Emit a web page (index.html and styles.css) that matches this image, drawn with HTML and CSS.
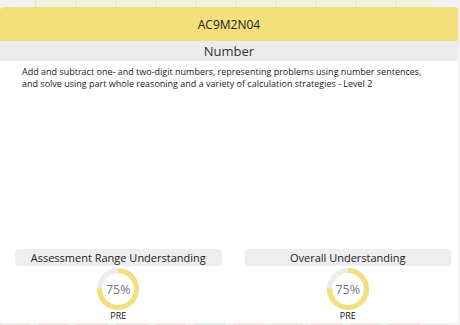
FILE: index.html
```html
<!DOCTYPE html>
<html lang="en">
<head>
  <meta charset="UTF-8">
  <title>AC9M2N04</title>
  <link rel="stylesheet" href="styles.css">
</head>
<body>
  <div class="top-strip">
    <span class="cell"></span><span class="cell"></span><span class="cell"></span><span class="cell"></span><span class="cell"></span>
    <span class="cell"></span><span class="cell"></span><span class="cell"></span><span class="cell"></span><span class="cell short"></span>
  </div>

  <div class="card">
    <div class="card-head">AC9M2N04</div>
    <div class="strand">Number</div>
    <p class="desc">Add and subtract one- and two-digit numbers, representing problems using number sentences, and solve using part whole reasoning and a variety of calculation strategies - Level 2</p>

    <div class="scores">
      <div class="score">
        <div class="score-label">Assessment Range Understanding</div>
        <div class="ring">
          <svg width="42" height="42" viewBox="0 0 42 42">
            <circle cx="21" cy="21" r="18.5" fill="none" stroke="#ececec" stroke-width="5"/>
            <circle cx="21" cy="21" r="18.5" fill="none" stroke="#f3df7b" stroke-width="5"
              stroke-dasharray="87.18 116.24" transform="rotate(-90 21 21)"/>
          </svg>
          <span class="ring-value">75%</span>
        </div>
        <div class="grade">PRE</div>
      </div>
      <div class="score">
        <div class="score-label">Overall Understanding</div>
        <div class="ring">
          <svg width="42" height="42" viewBox="0 0 42 42">
            <circle cx="21" cy="21" r="18.5" fill="none" stroke="#ececec" stroke-width="5"/>
            <circle cx="21" cy="21" r="18.5" fill="none" stroke="#f3df7b" stroke-width="5"
              stroke-dasharray="87.18 116.24" transform="rotate(-90 21 21)"/>
          </svg>
          <span class="ring-value">75%</span>
        </div>
        <div class="grade">PRE</div>
      </div>
    </div>
  </div>

  <div class="bottom-strip">
    <span class="chip peach"></span><span class="chip"></span><span class="chip"></span><span class="chip"></span><span class="chip"></span>
    <span class="chip green"></span><span class="chip"></span><span class="chip"></span><span class="chip"></span><span class="chip"></span><span class="chip"></span>
  </div>
</body>
</html>
```

FILE: styles.css
```css
body {
  margin: 0;
  background-color: #f1f1f1;
  font-family: 'Open Sans', 'Liberation Sans', sans-serif;
  color: #222;
  overflow: hidden;
}

.top-strip {
  display: flex;
  height: 7px;
  padding-left: 35px;
  gap: 1px;
}

.top-strip .cell {
  width: 38px;
  background-color: #f2f1dc;
  border-left: 1px solid #e2e2e2;
}

.top-strip .cell.short {
  width: 34px;
}

.card {
  width: 458px;
  height: 316px;
  background-color: #fff;
  border-radius: 4px;
  overflow: hidden;
  display: flex;
  flex-direction: column;
}

.card-head {
  background-color: #f3df7b;
  height: 34px;
  line-height: 35px;
  text-align: center;
  font-size: 12px;
  color: #222;
}

.strand {
  background-color: #ececec;
  height: 20px;
  line-height: 20px;
  text-align: center;
  font-size: 13px;
  color: #333;
}

.desc {
  margin: 5px 0 0 22px;
  padding-right: 20px;
  font-size: 9px;
  line-height: 12px;
  color: #222;
}

.scores {
  margin-top: auto;
  display: grid;
  grid-template-columns: 1fr 1fr;
  gap: 23px;
  padding: 0 7px 1px 15px;
}

.score {
  display: flex;
  flex-direction: column;
  align-items: center;
}

.score-label {
  align-self: stretch;
  background-color: #eeeeee;
  border-radius: 4px;
  height: 17px;
  line-height: 17px;
  text-align: center;
  font-size: 11px;
  color: #222;
}

.ring {
  position: relative;
  width: 42px;
  height: 42px;
  margin-top: 2px;
}

.ring svg {
  display: block;
}

.ring-value {
  position: absolute;
  inset: 0;
  display: flex;
  align-items: center;
  justify-content: center;
  font-size: 12.5px;
  color: #777;
}

.grade {
  font-size: 9px;
  line-height: 12px;
  color: #111;
}

.bottom-strip {
  display: flex;
  gap: 8px;
  height: 2px;
  margin-top: 1px;
}

.bottom-strip .chip {
  width: 31px;
  background-color: #efd9d9;
}

.bottom-strip .chip.peach {
  width: 30px;
  background-color: #f3e2cf;
}

.bottom-strip .chip.green {
  background-color: #cdeee0;
}
```
